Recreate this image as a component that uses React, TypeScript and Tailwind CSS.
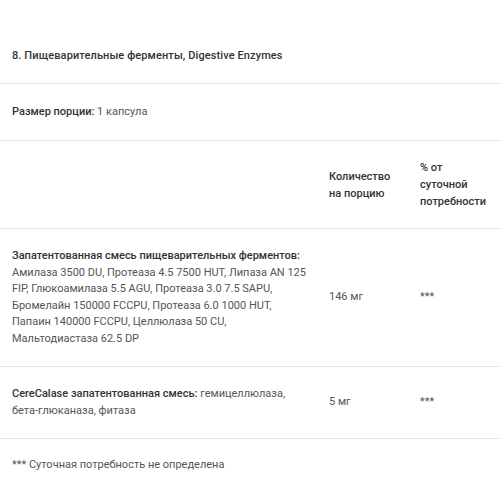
export default function App() {
  const cell = "align-middle";
  return (
    <div
      className="min-h-screen w-full bg-white text-[11px] leading-[16.5px] text-[#555]"
      style={{ fontFamily: "Roboto, 'Noto Sans', sans-serif" }}
    >
      <div className="px-3 pt-[48px] pb-[18px] font-medium tracking-[0.1px] text-[#333]">
        8. Пищеварительные ферменты, Digestive Enzymes
      </div>
      <div className="border-t border-[#e5e5e5] px-3 pt-[20px] pb-[20px]">
        <span className="font-medium text-[#333]">Размер порции:</span> 1 капсула
      </div>

      <table className="w-full border-collapse">
        <colgroup>
          <col className="w-[317px]" />
          <col className="w-[91px]" />
          <col />
        </colgroup>
        <tbody>
          <tr className="h-[88px] border-t border-[#e5e5e5] font-medium leading-[17px] text-[#333]">
            <td className={`${cell} pl-3`}></td>
            <td className={`${cell} pl-3`}>
              Количество
              <br />
              на порцию
            </td>
            <td className={`${cell} pl-3`}>
              % от
              <br />
              суточной
              <br />
              потребности
            </td>
          </tr>
          <tr className="border-t border-[#e5e5e5]">
            <td className={`${cell} py-[19px] pl-3 pr-1`}>
              <span className="font-medium text-[#333]">
                Запатентованная смесь пищеварительных ферментов:
              </span>{" "}
              Амилаза 3500 DU, Протеаза 4.5 7500 HUT, Липаза AN 125 FIP, Глюкоамилаза 5.5 AGU,
              Протеаза 3.0 7.5 SAPU, Бромелайн 150000 FCCPU, Протеаза 6.0 1000 HUT, Папаин 140000
              FCCPU, Целлюлаза 50 CU, Мальтодиастаза 62.5 DP
            </td>
            <td className={`${cell} pl-3`}>146 мг</td>
            <td className={`${cell} pl-3`}>***</td>
          </tr>
          <tr className="border-t border-[#e5e5e5]">
            <td className={`${cell} py-[19px] pl-3 pr-1`}>
              <span className="font-medium text-[#333]">CereCalase запатентованная смесь:</span>{" "}
              гемицеллюлаза, бета-глюканаза, фитаза
            </td>
            <td className={`${cell} pl-3`}>5 мг</td>
            <td className={`${cell} pl-3`}>***</td>
          </tr>
        </tbody>
      </table>

      <div className="border-t border-[#e5e5e5] px-3 pt-[18px]">*** Суточная потребность не определена</div>
    </div>
  );
}
